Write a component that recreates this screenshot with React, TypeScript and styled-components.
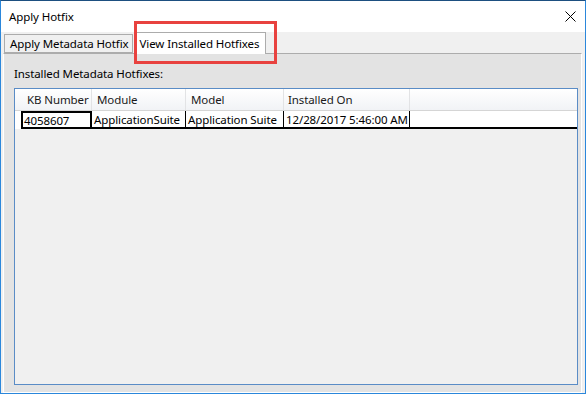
import React from "react";
import styled, { createGlobalStyle } from "styled-components";

const GlobalStyle = createGlobalStyle`
	html, body {
		margin: 0;
		padding: 0;
		background: #ffffff;
	}
	body {
		font-family: "Noto Sans", "Liberation Sans", sans-serif;
		font-size: 11.5px;
		letter-spacing: -0.1px;
		color: #000;
	}
`;

const Window = styled.div`
	width: 586px;
	height: 394px;
	box-sizing: border-box;
	display: flex;
	flex-direction: column;
	border: 1px solid #2b87db;
	border-top-color: #1d4f80;
	background: #f0f0f0;
`;

const TitleBar = styled.div`
	height: 31px;
	flex: none;
	display: flex;
	align-items: center;
	justify-content: space-between;
	padding: 0 9px 0 8px;
	background: #ffffff;
`;

const Title = styled.span`
	color: #000;
`;

const Body = styled.div`
	flex: 1;
	display: flex;
	flex-direction: column;
	padding: 0 3px 0 2px;
	min-height: 0;
`;

const TabStrip = styled.div`
	height: 21px;
	flex: none;
	display: flex;
	align-items: flex-end;
	padding-left: 1px;
	position: relative;
	z-index: 1;
`;

const Tab = styled.div<{ $active?: boolean }>`
	position: relative;
	box-sizing: border-box;
	height: ${(p) => (p.$active ? "22px" : "19px")};
	margin-bottom: ${(p) => (p.$active ? "-1px" : "0")};
	margin-left: ${(p) => (p.$active ? "2px" : "0")};
	padding: ${(p) => (p.$active ? "0 6px 0 4px" : "0 3px 0 5px")};
	display: flex;
	align-items: center;
	background: ${(p) => (p.$active ? "#ffffff" : "#f0f0f0")};
	border: 1px solid #acacac;
	border-bottom: ${(p) => (p.$active ? "none" : "1px solid #acacac")};
	white-space: nowrap;
	line-height: 16px;
`;

const Highlight = styled.div`
	position: absolute;
	left: -2px;
	top: -12px;
	width: 143px;
	height: 43px;
	box-sizing: border-box;
	border: 3px solid #e8423f;
	pointer-events: none;
`;

const TabPage = styled.div`
	flex: 1;
	display: flex;
	flex-direction: column;
	min-height: 0;
	background: #e3e3e3;
	border: 1px solid #ffffff;
	border-top-color: #acacac;
	padding: 12px 3px 7px 10px;
	gap: 6px;
`;

const Label = styled.div`
	line-height: 16px;
`;

const Grid = styled.div`
	flex: 1;
	display: flex;
	flex-direction: column;
	background: #f0f0f0;
	border: 1px solid #5a8cc6;
`;

const HeaderRow = styled.div`
	height: 21px;
	display: flex;
	background: linear-gradient(#ffffff, #f1f3f6);
	border-bottom: 1px solid #d5d5d5;
`;

const RowHeader = styled.div`
	width: 6px;
	flex: none;
`;

const HeaderCell = styled.div<{ $w: number; $pad: number }>`
	width: ${(p) => p.$w}px;
	box-sizing: border-box;
	flex: none;
	display: flex;
	align-items: center;
	padding-left: ${(p) => p.$pad}px;
	border-right: 1px solid #e2e3e5;
	color: #1a1a1a;
	white-space: nowrap;
`;

const DataRow = styled.div`
	height: 18px;
	display: flex;
	background: #ffffff;
`;

const RowFiller = styled.div`
	flex: 1;
	border-bottom: 2px solid #000;
`;

const DataCell = styled.div<{ $w: number; $focus?: boolean }>`
	width: ${(p) => p.$w}px;
	box-sizing: border-box;
	flex: none;
	display: flex;
	align-items: center;
	padding-left: ${(p) => (p.$focus ? "1px" : "2px")};
	white-space: nowrap;
	overflow: hidden;
	border-right: ${(p) => (p.$focus ? "2px" : "1px")} solid #000;
	border-bottom: 2px solid #000;
	border-top: ${(p) => (p.$focus ? "2px solid #000" : "none")};
	border-left: ${(p) => (p.$focus ? "2px solid #000" : "none")};
`;

const columns = [
	{ title: "KB Number", w: 71, pad: 6 },
	{ title: "Module", w: 94, pad: 5 },
	{ title: "Model", w: 98, pad: 5 },
	{ title: "Installed On", w: 126, pad: 4 },
];

const rows = [["4058607", "ApplicationSuite", "Application Suite", "12/28/2017 5:46:00 AM"]];

function CloseIcon() {
	return (
		<svg width="11" height="11" viewBox="0 0 11 11">
			<path d="M0.5 0.5 L10.5 10.5 M10.5 0.5 L0.5 10.5" stroke="#000" strokeWidth="1" fill="none" />
		</svg>
	);
}

export default function App() {
	return (
		<>
			<GlobalStyle />
			<Window>
				<TitleBar>
					<Title>Apply Hotfix</Title>
					<CloseIcon />
				</TitleBar>
				<Body>
					<TabStrip>
						<Tab>Apply Metadata Hotfix</Tab>
						<Tab $active>
							View Installed Hotfixes
							<Highlight />
						</Tab>
					</TabStrip>
					<TabPage>
						<Label>Installed Metadata Hotfixes:</Label>
						<Grid>
							<HeaderRow>
								<RowHeader />
								{columns.map((c) => (
									<HeaderCell key={c.title} $w={c.w} $pad={c.pad}>
										{c.title}
									</HeaderCell>
								))}
							</HeaderRow>
							{rows.map((r, i) => (
								<DataRow key={i}>
									<RowHeader />
									{r.map((v, j) => (
										<DataCell key={j} $w={columns[j].w} $focus={j === 0}>
											{v}
										</DataCell>
									))}
									<RowFiller />
								</DataRow>
							))}
						</Grid>
					</TabPage>
				</Body>
			</Window>
		</>
	);
}
